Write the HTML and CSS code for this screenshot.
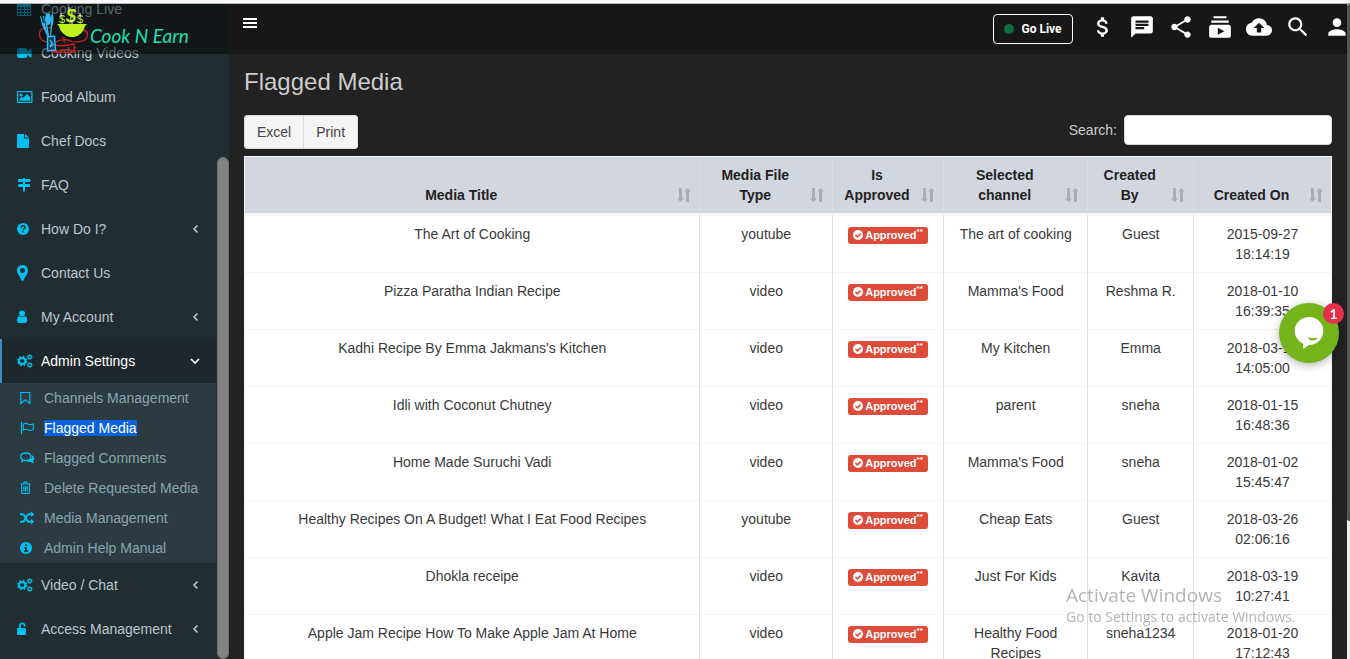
FILE: index.html
```html
<!DOCTYPE html>
<html lang="en">

<head>
    <meta charset="UTF-8">
    <meta name="viewport" content="width=device-width, initial-scale=1.0">
    <title>Flagged Media | Cook N Earn</title>
    <link rel="stylesheet" href="styles.css">
</head>

<body>

    <!-- icon sprite -->
    <svg class="sprite" xmlns="http://www.w3.org/2000/svg">
        <symbol id="i-calendar" viewBox="0 0 16 16">
            <path fill-rule="evenodd" d="M1 2h2V1q0-1 1-1t1 1v1h4V1q0-1 1-1t1 1v1h2q1 0 1 1v11q0 1-1 1H1q-1 0-1-1V3q0-1 1-1zM1 6v2h2V6zm3 0v2h3V6zm4 0v2h2V6zm3 0v2h2V6zM1 9v2h2V9zm3 0v2h3V9zm4 0v2h2V9zm3 0v2h2V9zM1 12v2h2v-2zm3 0v2h3v-2zm4 0v2h2v-2zm3 0v2h2v-2z" />
        </symbol>
        <symbol id="i-video" viewBox="0 0 16 16">
            <path d="M2.500 3h5.500q2.300 0 2.300 2.300v1.200L13.500 3.500q1-.7 1 .5v8q0 1.200-1 .5l-3.200-3v1.200Q10.300 13 8 13H2.500Q0 13 0 10.700V5.300Q0 3 2.500 3z" />
        </symbol>
        <symbol id="i-picture" viewBox="0 0 16 16">
            <path fill-rule="evenodd" d="M1 2h13.500q1 0 1 1v10q0 1-1 1H1q-1 0-1-1V3q0-1 1-1zm.2 1.200v9.600h13.100V3.200z" />
            <circle cx="4" cy="6" r="1.600" />
            <path d="M2.500 11.700V9.800l2.200-2 1.300 1.200 4-4 3.200 3.300v3.400z" />
        </symbol>
        <symbol id="i-file" viewBox="0 0 16 16">
            <path d="M1 1h6v4.500h5V14q0 1-1 1H1q-1 0-1-1V2q0-1 1-1zm7 0l4 3.600H8z" />
        </symbol>
        <symbol id="i-signs" viewBox="0 0 16 16">
            <path d="M6 1h2v1h4.500L14 3.500 12.500 5H8v2h5v3H8v4.500H6V10H2L.500 8.500 2 7h4V5H1V2h5z" />
        </symbol>
        <symbol id="i-question" viewBox="0 0 16 16">
            <circle cx="6" cy="8" r="6" />
            <path d="M4 6.600Q4.300 4.800 6 4.800q2 0 2 1.600 0 1-1.100 1.500Q6 8.300 6 9.300M6 10.200v1.500" fill="none" stroke="#222d32" stroke-width="1.600" />
        </symbol>
        <symbol id="i-marker" viewBox="0 0 16 16">
            <path fill-rule="evenodd" d="M5.500 0Q11 .3 11 5.500q0 1.500-1 3.500L6.300 15.500q-.8 1-1.600 0L1 9Q0 7 0 5.500 0 .3 5.500 0zm0 3a2.500 2.500 0 1 0 .1 0z" />
        </symbol>
        <symbol id="i-user" viewBox="0 0 16 16">
            <circle cx="5" cy="4.500" r="3" />
            <path d="M2 7q3 2.500 6 0 2.200.8 2.200 4.500 0 2.500-2.200 2.500H2Q0 14 0 11.500 0 7.800 2 7z" />
        </symbol>
        <symbol id="i-cogs" viewBox="0 0 16 16">
            <g fill="none" stroke="currentColor">
                <circle cx="5.200" cy="8" r="3.100" stroke-width="2" />
                <circle cx="5.200" cy="8" r="4.500" stroke-width="1.400" stroke-dasharray="1.800 1.734" />
                <circle cx="12.700" cy="4" r="1.700" stroke-width="1.200" />
                <circle cx="12.700" cy="4" r="2.600" stroke-width=".8" stroke-dasharray="1.300 1.423" />
                <circle cx="12.700" cy="12" r="1.700" stroke-width="1.200" />
                <circle cx="12.700" cy="12" r="2.600" stroke-width=".8" stroke-dasharray="1.300 1.423" />
            </g>
        </symbol>
        <symbol id="i-unlock" viewBox="0 0 16 16">
            <path d="M1 7h1V5q0-3.500 3.200-3.500T8.500 5v.5H6.800V5q0-1.800-1.600-1.800T3.700 5v2H8q1 0 1 1v5q0 1-1 1H1q-1 0-1-1V8q0-1 1-1z" />
        </symbol>
        <symbol id="i-bookmark" viewBox="0 0 16 16">
            <path d="M.8 2.500h9v11L5.300 9.700.8 13.500z" fill="none" stroke="currentColor" stroke-width="1.200" />
        </symbol>
        <symbol id="i-flag" viewBox="0 0 16 16">
            <path d="M1.500 2v12M3.300 4.200q2.700-1.600 5 0 2 1 5-.3v5.800q-3 1.400-5 .2-2.300-1.500-5 .3z" fill="none" stroke="currentColor" stroke-width="1.100" />
        </symbol>
        <symbol id="i-comments" viewBox="0 0 16 16">
            <path d="M5.700 3q5.200 0 5.200 3.700t-5.200 3.700q-.8 0-1.400-.2L2 11.500l.5-2.100Q.7 8.500.7 6.700.7 3 5.700 3z" fill="none" stroke="currentColor" stroke-width="1.300" />
            <path d="M12.300 5.200Q14.300 6.200 14.300 8.500q0 1.600-1.300 2.500.2 1.200 1.200 2.300-1.900 0-3.100-1.400-3.200.5-5.100-.6 6.300-.5 6.300-6.100z" />
        </symbol>
        <symbol id="i-trash" viewBox="0 0 16 16">
            <path d="M.5 4h10M3.500 4l.7-1.900h2.600L7.500 4M1.600 4.500v8q0 1 1 1h5.800q1 0 1-1v-8M3.800 6v5.500M5.500 6v5.500M7.200 6v5.500" fill="none" stroke="currentColor" stroke-width="1.100" />
        </symbol>
        <symbol id="i-random" viewBox="0 0 16 16">
            <path d="M0 4.300h2.500q1.500 0 3.200 3.700t3.300 3.700h2.500M0 11.700h2.500q1.500 0 3.200-3.700T9 4.300h2.500" fill="none" stroke="currentColor" stroke-width="1.900" />
            <path d="M11 1.500l3.300 2.800L11 7zM11 9l3.300 2.700-3.300 2.800z" />
        </symbol>
        <symbol id="i-info" viewBox="0 0 16 16">
            <path fill-rule="evenodd" d="M6 2a6 6 0 1 0 .1 0zM5 4h2v1.800H5zM4 7h3v3.500h1V12H4v-1.500h1v-2H4z" />
        </symbol>
        <symbol id="i-left" viewBox="0 0 8 10">
            <path d="M6.500 1.500L3 5l3.500 3.500" fill="none" stroke="currentColor" stroke-width="1.600" />
        </symbol>
        <symbol id="i-down" viewBox="0 0 10 10">
            <path d="M1 3l4 4 4-4" fill="none" stroke="currentColor" stroke-width="1.700" />
        </symbol>
        <symbol id="i-sort" viewBox="0 0 14 14">
            <path d="M2 0h3v10.500h2L3.500 14 0 10.500h2zM9 14h3V3.500h2L10.500 0 7 3.500h2z" />
        </symbol>
        <symbol id="i-check" viewBox="0 0 10 10">
            <circle cx="5" cy="5" r="5" />
            <path d="M2.500 5l1.900 1.900 3.300-3.300" fill="none" stroke="#dd4b39" stroke-width="1.500" />
        </symbol>
    </svg>

    <div class="top-strip"></div>

    <div class="app">
        <header class="header">
            <a href="#" class="logo">
                <svg class="logo-art" viewBox="0 0 52 48" aria-hidden="true">
                    <g fill="none" stroke="#c8201f" stroke-width="1.400">
                        <path d="M13 23Q1 21 1.500 30q.5 7 10 7M46 25q4 2 3.500 6-1 6-13 6" />
                        <path d="M18 37q8-5 17 0M24 32q3 3 2 5M16 40q10 2 20-1v7q-9-3-19 1M13 46q14 4 25 0" />
                    </g>
                    <path d="M19 19h30l-2 2q-2 9-11 11h-4q-9-2-11-11z" fill="#bdf01c" />
                    <g fill="#bdf01c" font-family="Liberation Sans" text-anchor="middle">
                        <text x="33" y="17" font-size="18" font-weight="bold" font-style="italic">$</text>
                        <text x="24" y="18" font-size="11">$</text>
                        <text x="42" y="18" font-size="11">$</text>
                    </g>
                    <path d="M31 2v4M34 15v4M23 8v4M42 8v4" stroke="#fff" />
                    <g fill="#2db9f5">
                        <ellipse cx="10" cy="14" rx="3" ry="6" />
                        <path d="M9 18l2.500 15h-1.500L7.500 18zM14 7q3 7 0 15l-1 11h-1l1-20z" />
                        <path d="M2 12l2 8 6 13h1L7 20l-1-9-1 0 1 7-1 0-2-7-1 0 2 7z" />
                    </g>
                    <path d="M9.500 32l7-1 1 14-8 1z" fill="#123f56" stroke="#2db9f5" stroke-width="1.500" />
                    <path d="M12 35l2 3-2 4 4-3" fill="none" stroke="#2db9f5" stroke-width="1.500" />
                </svg>
                <span class="logo-text">Cook N Earn</span>
            </a>
            <div class="navbar">
                <button class="menu-toggle" aria-label="Toggle navigation">
                    <svg width="14" height="12" viewBox="0 0 14 12"><path d="M0 0h14v2H0zM0 4h14v2H0zM0 8h14v2H0z" /></svg>
                </button>
                <button class="go-live"><span class="live-dot"></span>Go Live</button>
                <nav class="nav-icons">
                    <a href="#" aria-label="Earnings"><svg viewBox="0 0 24 24"><path d="M11.800 10.900c-2.270-.59-3-1.200-3-2.150 0-1.090 1.010-1.850 2.700-1.850 1.780 0 2.440.85 2.500 2.100h2.210c-.07-1.720-1.120-3.300-3.210-3.810V3h-3v2.160c-1.940.42-3.500 1.680-3.500 3.610 0 2.310 1.910 3.460 4.700 4.130 2.500.6 3 1.480 3 2.410 0 .69-.49 1.790-2.700 1.790-2.060 0-2.870-.92-2.980-2.100h-2.200c.12 2.190 1.760 3.420 3.680 3.830V21h3v-2.150c1.950-.37 3.500-1.500 3.500-3.550 0-2.840-2.430-3.810-4.700-4.400z" /></svg></a>
                    <a href="#" aria-label="Messages"><svg viewBox="0 0 24 24"><path d="M20 2H4c-1.100 0-1.990.9-1.990 2L2 22l4-4h14c1.100 0 2-.9 2-2V4c0-1.100-.9-2-2-2zM6 9h12v2H6V9zm8 5H6v-2h8v2zm4-6H6V6h12v2z" /></svg></a>
                    <a href="#" aria-label="Share"><svg viewBox="0 0 24 24"><path d="M18 16.080c-.76 0-1.440.3-1.960.77L8.910 12.700c.05-.23.09-.46.09-.7s-.04-.47-.09-.7l7.050-4.110c.54.5 1.250.81 2.040.81 1.660 0 3-1.340 3-3s-1.340-3-3-3-3 1.340-3 3c0 .24.04.47.09.7L8.040 9.810C7.500 9.310 6.790 9 6 9c-1.660 0-3 1.340-3 3s1.340 3 3 3c.79 0 1.500-.31 2.040-.81l7.120 4.160c-.05.21-.08.43-.08.65 0 1.610 1.310 2.920 2.920 2.920s2.920-1.310 2.920-2.920-1.310-2.920-2.920-2.920z" /></svg></a>
                    <a href="#" aria-label="Subscriptions"><svg viewBox="0 0 24 24"><path d="M20 8H4V6h16v2zm-2-6H6v2h12V2zm4 10v8c0 1.100-.9 2-2 2H4c-1.100 0-2-.9-2-2v-8c0-1.100.9-2 2-2h16c1.100 0 2 .9 2 2zm-6 4l-6-3.270v6.530L16 16z" /></svg></a>
                    <a href="#" aria-label="Upload"><svg viewBox="0 0 24 24"><path d="M19.350 10.040C18.670 6.590 15.640 4 12 4 9.110 4 6.600 5.640 5.350 8.040 2.340 8.360 0 10.910 0 14c0 3.310 2.690 6 6 6h13c2.760 0 5-2.240 5-5 0-2.640-2.050-4.780-4.650-4.960zM14 13v4h-4v-4H7l5-5 5 5h-3z" /></svg></a>
                    <a href="#" aria-label="Search"><svg viewBox="0 0 24 24"><path d="M15.500 14h-.79l-.28-.27C15.410 12.590 16 11.110 16 9.500 16 5.910 13.090 3 9.500 3S3 5.910 3 9.500 5.910 16 9.500 16c1.610 0 3.090-.59 4.230-1.570l.27.28v.79l5 4.990L20.490 19l-4.990-5zm-6 0C7.010 14 5 11.990 5 9.500S7.010 5 9.500 5 14 7.010 14 9.500 11.990 14 9.500 14z" /></svg></a>
                    <a href="#" aria-label="Profile"><svg viewBox="0 0 24 24"><path d="M12 12c2.210 0 4-1.790 4-4s-1.790-4-4-4-4 1.790-4 4 1.790 4 4 4zm0 2c-2.670 0-8 1.340-8 4v2h16v-2c0-2.660-5.330-4-8-4z" /></svg></a>
                </nav>
            </div>
        </header>

        <aside class="sidebar">
            <ul class="menu">
                <li><a href="#"><svg class="icon"><use href="#i-calendar" /></svg><span>Cooking Live</span></a></li>
                <li><a href="#"><svg class="icon"><use href="#i-video" /></svg><span>Cooking Videos</span></a></li>
                <li><a href="#"><svg class="icon"><use href="#i-picture" /></svg><span>Food Album</span></a></li>
                <li><a href="#"><svg class="icon"><use href="#i-file" /></svg><span>Chef Docs</span></a></li>
                <li><a href="#"><svg class="icon"><use href="#i-signs" /></svg><span>FAQ</span></a></li>
                <li><a href="#"><svg class="icon"><use href="#i-question" /></svg><span>How Do I?</span><svg class="arrow"><use href="#i-left" /></svg></a></li>
                <li><a href="#"><svg class="icon"><use href="#i-marker" /></svg><span>Contact Us</span></a></li>
                <li><a href="#"><svg class="icon"><use href="#i-user" /></svg><span>My Account</span><svg class="arrow"><use href="#i-left" /></svg></a></li>
                <li class="active">
                    <a href="#"><svg class="icon"><use href="#i-cogs" /></svg><span>Admin Settings</span><svg class="arrow"><use href="#i-down" /></svg></a>
                    <ul class="submenu">
                        <li><a href="#"><svg class="icon"><use href="#i-bookmark" /></svg><span>Channels Management</span></a></li>
                        <li><a href="#"><svg class="icon"><use href="#i-flag" /></svg><span class="selected">Flagged Media</span></a></li>
                        <li><a href="#"><svg class="icon"><use href="#i-comments" /></svg><span>Flagged Comments</span></a></li>
                        <li><a href="#"><svg class="icon"><use href="#i-trash" /></svg><span>Delete Requested Media</span></a></li>
                        <li><a href="#"><svg class="icon"><use href="#i-random" /></svg><span>Media Management</span></a></li>
                        <li><a href="#"><svg class="icon"><use href="#i-info" /></svg><span>Admin Help Manual</span></a></li>
                    </ul>
                </li>
                <li><a href="#"><svg class="icon"><use href="#i-cogs" /></svg><span>Video / Chat</span><svg class="arrow"><use href="#i-left" /></svg></a></li>
                <li><a href="#"><svg class="icon"><use href="#i-unlock" /></svg><span>Access Management</span><svg class="arrow"><use href="#i-left" /></svg></a></li>
            </ul>
            <div class="side-scroll"></div>
        </aside>

        <main class="content">
            <h1>Flagged Media</h1>
            <div class="toolbar">
                <div class="btn-group">
                    <button>Excel</button>
                    <button>Print</button>
                </div>
                <div class="search">
                    <label for="search">Search:</label>
                    <input type="search" id="search">
                </div>
            </div>

            <table class="media-table">
                <colgroup>
                    <col class="col-title">
                    <col class="col-type">
                    <col class="col-approved">
                    <col class="col-channel">
                    <col class="col-by">
                    <col class="col-on">
                </colgroup>
                <thead>
                    <tr>
                        <th><button class="sort"><span>Media Title</span><svg><use href="#i-sort" /></svg></button></th>
                        <th><button class="sort"><span>Media File Type</span><svg><use href="#i-sort" /></svg></button></th>
                        <th><button class="sort"><span>Is Approved</span><svg><use href="#i-sort" /></svg></button></th>
                        <th><button class="sort"><span>Selected channel</span><svg><use href="#i-sort" /></svg></button></th>
                        <th><button class="sort"><span>Created By</span><svg><use href="#i-sort" /></svg></button></th>
                        <th><button class="sort"><span>Created On</span><svg><use href="#i-sort" /></svg></button></th>
                    </tr>
                </thead>
                <tbody>
                    <tr>
                        <td>The Art of Cooking</td>
                        <td>youtube</td>
                        <td><span class="label"><svg><use href="#i-check" /></svg>Approved<sup>**</sup></span></td>
                        <td>The art of cooking</td>
                        <td>Guest</td>
                        <td>2015-09-27 18:14:19</td>
                    </tr>
                    <tr>
                        <td>Pizza Paratha Indian Recipe</td>
                        <td>video</td>
                        <td><span class="label"><svg><use href="#i-check" /></svg>Approved<sup>**</sup></span></td>
                        <td>Mamma's Food</td>
                        <td>Reshma R.</td>
                        <td>2018-01-10 16:39:35</td>
                    </tr>
                    <tr>
                        <td>Kadhi Recipe By Emma Jakmans's Kitchen</td>
                        <td>video</td>
                        <td><span class="label"><svg><use href="#i-check" /></svg>Approved<sup>**</sup></span></td>
                        <td>My Kitchen</td>
                        <td>Emma</td>
                        <td>2018-03-19 14:05:00</td>
                    </tr>
                    <tr>
                        <td>Idli with Coconut Chutney</td>
                        <td>video</td>
                        <td><span class="label"><svg><use href="#i-check" /></svg>Approved<sup>**</sup></span></td>
                        <td>parent</td>
                        <td>sneha</td>
                        <td>2018-01-15 16:48:36</td>
                    </tr>
                    <tr>
                        <td>Home Made Suruchi Vadi</td>
                        <td>video</td>
                        <td><span class="label"><svg><use href="#i-check" /></svg>Approved<sup>**</sup></span></td>
                        <td>Mamma's Food</td>
                        <td>sneha</td>
                        <td>2018-01-02 15:45:47</td>
                    </tr>
                    <tr>
                        <td>Healthy Recipes On A Budget! What I Eat Food Recipes</td>
                        <td>youtube</td>
                        <td><span class="label"><svg><use href="#i-check" /></svg>Approved<sup>**</sup></span></td>
                        <td>Cheap Eats</td>
                        <td>Guest</td>
                        <td>2018-03-26 02:06:16</td>
                    </tr>
                    <tr>
                        <td>Dhokla receipe</td>
                        <td>video</td>
                        <td><span class="label"><svg><use href="#i-check" /></svg>Approved<sup>**</sup></span></td>
                        <td>Just For Kids</td>
                        <td>Kavita</td>
                        <td>2018-03-19 10:27:41</td>
                    </tr>
                    <tr>
                        <td>Apple Jam Recipe How To Make Apple Jam At Home</td>
                        <td>video</td>
                        <td><span class="label"><svg><use href="#i-check" /></svg>Approved<sup>**</sup></span></td>
                        <td>Healthy Food Recipes</td>
                        <td>sneha1234</td>
                        <td>2018-01-20 17:12:43</td>
                    </tr>
                </tbody>
            </table>
        </main>

        <div class="page-scroll"><div class="page-thumb"></div></div>
    </div>

    <button class="chat" aria-label="Open chat">
        <svg width="30" height="32" viewBox="0 0 30 32">
            <path d="M15 0a14.300 14 0 0 1 0 28l-5 3.500q-.8.500-.8-.5v-4.200A14.300 14 0 0 1 15 0z" fill="#fff" />
            <path d="M14 20q5 2.500 9.500 0-1 3.500-4.800 3.500T14 20z" fill="#76b41c" />
        </svg>
        <span class="chat-count">1</span>
    </button>

    <div class="watermark">
        <div class="watermark-title">Activate Windows</div>
        <div>Go to Settings to activate Windows.</div>
    </div>

</body>

</html>
```
FILE: styles.css
```css
* {
    box-sizing: border-box;
}

body {
    margin: 0;
    height: 100vh;
    display: flex;
    flex-direction: column;
    overflow: hidden;
    background: #222;
    color: #3a3a3a;
    font-family: "Liberation Sans", Arial, sans-serif;
    font-size: 14px;
    line-height: 20px;
}

a {
    color: inherit;
    text-decoration: none;
}

button {
    font-family: inherit;
    font-size: inherit;
    line-height: inherit;
    cursor: pointer;
}

svg {
    fill: currentColor;
    flex: none;
}

.sprite {
    position: absolute;
    width: 0;
    height: 0;
}

.top-strip {
    flex: none;
    height: 4px;
    background: #fafafa;
    border-bottom: 1px solid #b5b5b5;
}

.app {
    position: relative;
    flex: 1;
    min-height: 0;
    display: flex;
}

/* header, stays over the scrolled sidebar */
.header {
    position: absolute;
    top: 0;
    left: 0;
    right: 0;
    height: 50px;
    display: flex;
    color: #fff;
}

.logo {
    width: 229px;
    padding-left: 38px;
    display: flex;
    align-items: center;
    background: rgba(0, 0, 0, 0.5);
}

.logo-art {
    width: 52px;
    height: 48px;
}

.logo-text {
    padding-top: 13px;
    color: #1fe0b0;
    font-family: Lato, sans-serif;
    font-style: italic;
    font-size: 19px;
}

.navbar {
    flex: 1;
    display: flex;
    align-items: center;
    padding-left: 14px;
    background: rgba(0, 0, 0, 0.3);
}

.menu-toggle {
    padding: 0 0 10px;
    border: 0;
    background: none;
    color: #fff;
    margin-right: auto;
}

.menu-toggle svg {
    display: block;
}

.go-live {
    width: 80px;
    height: 30px;
    padding: 0;
    display: flex;
    align-items: center;
    justify-content: center;
    gap: 7px;
    border: 1px solid #fff;
    border-radius: 4px;
    background: none;
    color: #fff;
    font-family: Roboto, sans-serif;
    font-size: 12px;
    font-weight: bold;
}

.live-dot {
    width: 10px;
    height: 10px;
    border-radius: 50%;
    background: #0d6b3f;
}

.nav-icons {
    display: flex;
    gap: 13px;
    padding: 0 0 5px 17px;
}

.nav-icons svg {
    display: block;
    width: 26px;
    height: 26px;
}

/* sidebar */
.sidebar {
    flex: none;
    width: 229px;
    display: flex;
    overflow: hidden;
    background: #222d32;
}

.menu {
    flex: 1;
    margin: -17px 0 0;
    padding: 0;
    list-style: none;
    color: #b8c7ce;
}

.menu a {
    height: 44px;
    display: flex;
    align-items: center;
    gap: 8px;
    padding: 0 16px 0 14px;
    border-left: 3px solid transparent;
    white-space: nowrap;
}

.icon {
    width: 16px;
    height: 16px;
    color: #00c0ef;
}

.arrow {
    width: 10px;
    height: 10px;
    margin-left: auto;
}

.menu .active > a {
    border-left: 2px solid #3c8dbc;
    padding-left: 15px;
    background: #1e282c;
    color: #fff;
}

.submenu {
    margin: 0;
    padding: 0;
    list-style: none;
    background: #2c3b41;
    color: #8aa4af;
}

.submenu a {
    height: 30px;
    padding-left: 17px;
}

.selected {
    line-height: 16px;
    background: #0a62dc;
    color: #fff;
}

.side-scroll {
    flex: none;
    width: 12px;
    margin: 153px 0 0 1px;
    border: 1px solid #707070;
    border-radius: 6px;
    background: #828282;
}

/* content */
.content {
    flex: 1;
    min-width: 0;
    padding: 65px 15px 0;
    overflow: hidden;
}

h1 {
    margin: 0 0 20px;
    color: #ccc;
    font-size: 24px;
    font-weight: normal;
    line-height: 26px;
}

.toolbar {
    display: flex;
    justify-content: space-between;
    align-items: flex-start;
    margin-bottom: 7px;
}

.btn-group {
    display: flex;
}

.btn-group button {
    height: 34px;
    padding: 0 12px;
    border: 1px solid #ddd;
    border-radius: 3px 0 0 3px;
    background: #f4f4f4;
    color: #444;
}

.btn-group button + button {
    margin-left: -1px;
    border-radius: 0 3px 3px 0;
}

.search {
    display: flex;
    align-items: center;
    gap: 7px;
    color: #ccc;
}

.search input {
    width: 208px;
    height: 30px;
    padding: 4px 8px;
    border: 1px solid #d2d6de;
    border-radius: 4px;
    background: #fff;
    font: inherit;
}

.media-table {
    width: 100%;
    table-layout: fixed;
    border: 1px solid #f4f4f4;
    border-right: 0;
    border-spacing: 0;
    background: #fff;
    text-align: center;
}

.col-title {
    width: 41.900%;
}

.col-type {
    width: 12.200%;
}

.col-approved {
    width: 10.200%;
}

.col-channel {
    width: 13.300%;
}

.col-by {
    width: 9.700%;
}

.media-table th,
.media-table td {
    padding: 8px;
    border-right: 1px solid #ddd;
}

.media-table th:last-child,
.media-table td:last-child {
    border-right-color: #f4f4f4;
}

.media-table th {
    vertical-align: bottom;
    border-bottom: 2px solid #f4f4f4;
    background: #d2d6de;
    background-clip: padding-box;
}

.media-table td {
    vertical-align: top;
    border-top: 1px solid #f4f4f4;
}

.sort {
    width: 100%;
    padding: 0;
    display: flex;
    align-items: flex-end;
    gap: 8px;
    border: 0;
    background: none;
    color: #222;
    font-weight: bold;
}

.sort span {
    flex: 1;
}

.sort svg {
    width: 14px;
    height: 14px;
    margin-bottom: 3px;
    color: #a9adb5;
}

.label {
    display: inline-flex;
    align-items: center;
    height: 17px;
    padding: 0 5px;
    border-radius: 3px;
    background: #dd4b39;
    color: #fff;
    font-size: 11px;
    font-weight: bold;
    line-height: 17px;
    vertical-align: middle;
}

.label svg {
    width: 10px;
    height: 10px;
    margin-right: 2px;
}

.label sup {
    align-self: flex-start;
    font-size: 8px;
    line-height: 10px;
}

.page-scroll {
    position: relative;
    flex: none;
    width: 3px;
    background: #eee;
}

.page-thumb {
    height: 79%;
    border-radius: 2px 0 0 2px;
    background: #555;
}

/* floating chat button */
.chat {
    position: fixed;
    right: 11px;
    top: 303px;
    width: 60px;
    height: 60px;
    padding: 0;
    display: flex;
    align-items: center;
    justify-content: center;
    border: 0;
    border-radius: 50%;
    background: #76b41c;
    box-shadow: 0 2px 8px rgba(0, 0, 0, 0.3);
}

.chat-count {
    position: absolute;
    top: 0;
    right: -5px;
    width: 21px;
    height: 21px;
    border-radius: 50%;
    background: #e6304b;
    color: #fff;
    font-family: Lato, sans-serif;
    font-weight: bold;
    line-height: 21px;
}

.watermark {
    position: fixed;
    right: 48px;
    bottom: 32px;
    width: 236px;
    color: rgba(140, 140, 140, 0.65);
    font-family: "Open Sans", sans-serif;
    font-size: 14px;
    white-space: nowrap;
    pointer-events: none;
}

.watermark-title {
    font-size: 19px;
    line-height: 24px;
}
```
